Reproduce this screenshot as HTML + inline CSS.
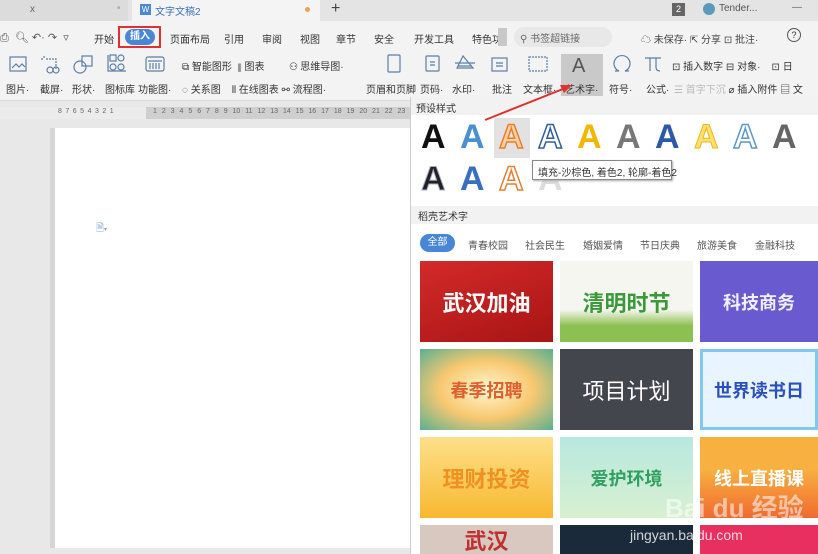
<!DOCTYPE html>
<html><head><meta charset="utf-8"><style>
*{margin:0;padding:0;box-sizing:border-box}
body{width:818px;height:554px;overflow:hidden;background:#e8e8e8;font-family:"Liberation Sans","Noto Sans CJK SC",sans-serif;font-size:10px;color:#333;position:relative}
.a{position:absolute;white-space:nowrap}
.l{position:absolute;white-space:nowrap;top:81px}
.ic{position:absolute}
.th{position:absolute;width:133px;height:81px;overflow:hidden;display:flex;align-items:center;justify-content:center;font-weight:bold;font-size:22px}
.A{position:absolute;font-family:"Liberation Sans",sans-serif;font-weight:bold;font-size:34px;line-height:34px}
.cat{position:absolute;top:237px;font-size:10px;color:#555}
</style></head><body>
<div class="a" style="left:0;top:0;width:818px;height:21px;background:#e4e4e4"></div>
<div class="a" style="left:0;top:0;width:128px;height:21px;background:#dcdcdc"></div>
<div class="a" style="left:30px;top:4px;color:#666">x</div>
<div class="a" style="left:117px;top:3px;color:#aaa">•</div>
<div class="a" style="left:132px;top:0;width:188px;height:21px;background:#f4f4f4"></div>
<div class="a" style="left:140px;top:4px;width:11px;height:11px;background:#4a86d8;color:#fff;font-size:8px;text-align:center;line-height:11px">W</div>
<div class="a" style="left:155px;top:3px;color:#3a6fc4;font-size:10px">文字文稿2</div>
<div class="a" style="left:305px;top:7px;width:5px;height:5px;border-radius:50%;background:#f0a050"></div>
<div class="a" style="left:331px;top:0;font-size:16px;color:#444">+</div>
<div class="a" style="left:672px;top:3px;width:13px;height:13px;background:#666;color:#fff;font-size:9px;text-align:center;line-height:13px">2</div>
<div class="a" style="left:703px;top:3px;width:12px;height:12px;border-radius:50%;background:#5a9ab8"></div>
<div class="a" style="left:719px;top:3px;color:#555">Tender...</div>
<div class="a" style="left:792px;top:2px;color:#666">—</div>
<div class="a" style="left:0;top:21px;width:818px;height:79px;background:#f3f3f3"></div>
<div class="a" style="left:0;top:31px;color:#555;font-size:11px">⎙ &nbsp;🔍︎ ↶· ↷ &nbsp;▿</div>
<div class="a" style="left:94px;top:31px;font-size:10px">开始</div>
<div class="a" style="left:118px;top:26px;width:43px;height:22px;border:2px solid #e03030"></div>
<div class="a" style="left:125px;top:29px;width:30px;height:16px;border-radius:8px;background:#4a86d8;color:#fff;font-size:10px;text-align:center;line-height:16px;font-weight:bold">插入</div>
<div class="a" style="left:170px;top:31px">页面布局</div>
<div class="a" style="left:224px;top:31px">引用</div>
<div class="a" style="left:262px;top:31px">审阅</div>
<div class="a" style="left:300px;top:31px">视图</div>
<div class="a" style="left:336px;top:31px">章节</div>
<div class="a" style="left:374px;top:31px">安全</div>
<div class="a" style="left:414px;top:31px">开发工具</div>
<div class="a" style="left:472px;top:31px">特色功</div>
<div class="a" style="left:498px;top:28px;width:9px;height:18px;background:#c8c8c8"></div>
<div class="a" style="left:514px;top:27px;width:98px;height:20px;border-radius:10px;background:#e8e8e8"></div>
<div class="a" style="left:520px;top:30px;color:#666">⚲ 书签超链接</div>
<div class="a" style="left:641px;top:31px;color:#444">☁ 未保存· ⇱ 分享 ⊡ 批注·</div>
<div class="a" style="left:787px;top:28px;width:14px;height:14px;border:1px solid #555;border-radius:50%;text-align:center;font-size:9px;line-height:12px">?</div>
<svg class="ic" style="left:0;top:52px" width="818" height="30" fill="none" stroke="#5a7fa8" stroke-width="1.2">
<rect x="10" y="5" width="16" height="14"/><path d="M12 16l4-4 3 3 3-3 3 3"/>
<path d="M44 4v3M41 7h3M46 7h10v10" stroke-dasharray="2 1"/><circle cx="50" cy="18" r="3"/><circle cx="56" cy="18" r="3"/>
<circle cx="80" cy="15" r="6"/><rect x="82" y="4" width="10" height="10"/>
<rect x="110" y="3" width="6" height="6"/><circle cx="121" cy="6" r="3"/><circle cx="113" cy="15" r="3"/><circle cx="121" cy="15" r="3"/><path d="M108 3v16h18"/>
<rect x="146" y="5" width="18" height="14" rx="2"/><path d="M148 9h14M150 11v6M153 11v6M156 11v6M159 11v6"/>
<rect x="388" y="3" width="12" height="17" rx="1"/>
<rect x="426" y="4" width="13" height="15" rx="1"/><path d="M430 10h5M430 13h5"/>
<path d="M463 4l-6 12h16zM455 11h20M458 14h14"/>
<rect x="492" y="6" width="15" height="13"/><path d="M496 11h7M496 14h7"/>
<rect x="529" y="5" width="18" height="14" stroke-dasharray="2 1"/>
<path d="M615 19h4a8 8 0 1 1 6 0h4"/>
<path d="M645 6h16M650 6v13M656 6v9q0 4 4 4"/>
</svg>
<div class="a" style="left:561px;top:54px;width:42px;height:42px;background:#c9c9c9"></div>
<div class="a" style="left:572px;top:55px;font-size:20px;color:#555">A</div>
<div class="l" style="left:6px">图片·</div><div class="l" style="left:40px">截屏·</div><div class="l" style="left:72px">形状·</div><div class="l" style="left:105px">图标库</div><div class="l" style="left:138px">功能图·</div>
<div class="a" style="left:182px;top:58px">⧉ 智能图形 &nbsp;⫴ 图表 &nbsp;&nbsp;&nbsp;&nbsp;&nbsp;&nbsp;&nbsp;&nbsp;⚇ 思维导图·</div>
<div class="a" style="left:182px;top:81px">◌ 关系图 &nbsp;&nbsp;&nbsp;⫴ 在线图表 ⚯ 流程图·</div>
<div class="l" style="left:366px">页眉和页脚</div><div class="l" style="left:420px">页码·</div><div class="l" style="left:452px">水印·</div><div class="l" style="left:492px">批注</div><div class="l" style="left:523px">文本框·</div>
<div class="l" style="left:565px">艺术字·</div>
<div class="l" style="left:609px">符号·</div><div class="l" style="left:646px">公式·</div>
<div class="a" style="left:672px;top:58px">⊡ 插入数字 ⊟ 对象· &nbsp;&nbsp;&nbsp;⊡ 日</div>
<div class="a" style="left:674px;top:81px"><span style="color:#bbb">☰ 首字下沉</span> ⌀ 插入附件 ▤ 文</div>
<div class="a" style="left:0;top:100px;width:818px;height:1px;background:#ddd"></div>
<div class="a" style="left:0;top:107px;width:410px;height:12px;background:#ececec"></div>
<div class="a" style="left:146px;top:107px;width:264px;height:12px;background:#cfcfcf"></div>
<div class="a" style="left:58px;top:108px;font-size:7px;color:#666;letter-spacing:3.5px">87654321</div>
<div class="a" style="left:153px;top:108px;font-size:7px;color:#666;word-spacing:3px">1 2 3 4 5 6 7 8 9 10 11 12 13 14 15 16 17 18 19 20 21 22 23 24 25</div>
<div class="a" style="left:50px;top:128px;width:5px;height:420px;background:#d5d5d5"></div>
<div class="a" style="left:55px;top:128px;width:356px;height:420px;background:#fff"></div>
<div class="a" style="left:96px;top:221px;color:#8aa8cc;font-size:10px">🗎<span style="font-size:6px;color:#999">▾</span></div>
<div class="a" style="left:410px;top:97px;width:408px;height:457px;background:#fff;border-left:1px solid #ccc"></div>
<div class="a" style="left:411px;top:97px;width:407px;height:18px;background:#f2f2f2"></div>
<div class="a" style="left:416px;top:100px;font-size:10px">预设样式</div>
<div class="a" style="left:494px;top:118px;width:36px;height:40px;background:#e2e2e2"></div>
<div class="A" style="left:421px;top:120px;color:#111">A</div>
<div class="A" style="left:460px;top:120px;color:#4a90d0">A</div>
<div class="A" style="left:499px;top:120px;color:#fbd0a0;-webkit-text-stroke:1.5px #e87e30">A</div>
<div class="A" style="left:538px;top:120px;color:#fff;-webkit-text-stroke:1.5px #2f5f9e">A</div>
<div class="A" style="left:577px;top:120px;color:#f0b800">A</div>
<div class="A" style="left:616px;top:120px;color:#777">A</div>
<div class="A" style="left:655px;top:120px;color:#2d5aa8">A</div>
<div class="A" style="left:694px;top:120px;color:#fde070;-webkit-text-stroke:1px #e8b820">A</div>
<div class="A" style="left:733px;top:120px;color:#fff;-webkit-text-stroke:1.5px #5a9ac8">A</div>
<div class="A" style="left:772px;top:120px;color:#666">A</div>
<div class="A" style="left:421px;top:162px;color:#222;-webkit-text-stroke:1px #aac">A</div>
<div class="A" style="left:460px;top:162px;color:#3a6ec0">A</div>
<div class="A" style="left:499px;top:162px;color:#fff;-webkit-text-stroke:1.5px #e87e30">A</div>
<div class="A" style="left:538px;top:162px;color:#ddd">A</div>
<div class="a" style="left:532px;top:160px;width:140px;height:20px;background:#fff;border:1px solid #888;box-shadow:1px 1px 2px #aaa;padding:3px 5px;font-size:10px">填充-沙棕色, 着色2, 轮廓-着色2</div>
<div class="a" style="left:411px;top:206px;width:407px;height:18px;background:#f2f2f2"></div>
<div class="a" style="left:418px;top:208px;font-size:10px">稻壳艺术字</div>
<div class="a" style="left:420px;top:234px;width:35px;height:18px;border-radius:9px;background:#4a86d8;color:#fff;text-align:center;line-height:18px">全部</div>
<div class="cat" style="left:468px">青春校园</div><div class="cat" style="left:525px">社会民生</div><div class="cat" style="left:583px">婚姻爱情</div><div class="cat" style="left:640px">节日庆典</div><div class="cat" style="left:697px">旅游美食</div><div class="cat" style="left:755px">金融科技</div>
<div class="th" style="left:420px;top:261px;background:linear-gradient(160deg,#d42a2a,#a81414);color:#fff">武汉加油</div>
<div class="th" style="left:560px;top:261px;background:linear-gradient(#f6f6f0 60%,#8cc050 80%);color:#3a9a3a">清明时节</div>
<div class="th" style="left:700px;top:261px;width:118px;background:#6a5ad0;color:#f0f0ff;font-size:18px">科技商务</div>
<div class="th" style="left:420px;top:349px;background:radial-gradient(#fff8d0,#f8c870 50%,#5ab090);color:#e06030;font-size:18px">春季招聘</div>
<div class="th" style="left:560px;top:349px;background:#44464e;color:#fff;font-weight:normal">项目计划</div>
<div class="th" style="left:700px;top:349px;width:118px;background:#e8f4ff;border:3px solid #7fc8f0;color:#2a50c0;font-size:18px">世界读书日</div>
<div class="th" style="left:420px;top:437px;background:linear-gradient(#fde08a,#f8b830);color:#f09020">理财投资</div>
<div class="th" style="left:560px;top:437px;background:linear-gradient(#b8e8e0,#d8f0d0);color:#30a060;font-size:18px">爱护环境</div>
<div class="th" style="left:700px;top:437px;width:118px;background:linear-gradient(#f8b040 40%,#f06a30);color:#fff;font-size:18px">线上直播课</div>
<div class="th" style="left:420px;top:525px;height:29px;background:#d8c8c0;color:#c03030">武汉</div>
<div class="th" style="left:560px;top:525px;height:29px;background:#1a2a3a"></div>
<div class="th" style="left:700px;top:525px;width:118px;height:29px;background:#e83060"></div>
<div class="a" style="left:665px;top:488px;font-size:26px;color:rgba(255,255,255,.55);font-weight:bold">Bai du 经验</div>
<div class="a" style="left:630px;top:527px;font-size:14px;color:rgba(255,255,255,.8)">jingyan.baidu.com</div>
<svg class="ic" style="left:480px;top:80px" width="100" height="45"><path d="M5 40L88 7" stroke="#e03030" stroke-width="2"/><path d="M92 5l-12 0 4 8z" fill="#e03030"/></svg>
</body></html>
